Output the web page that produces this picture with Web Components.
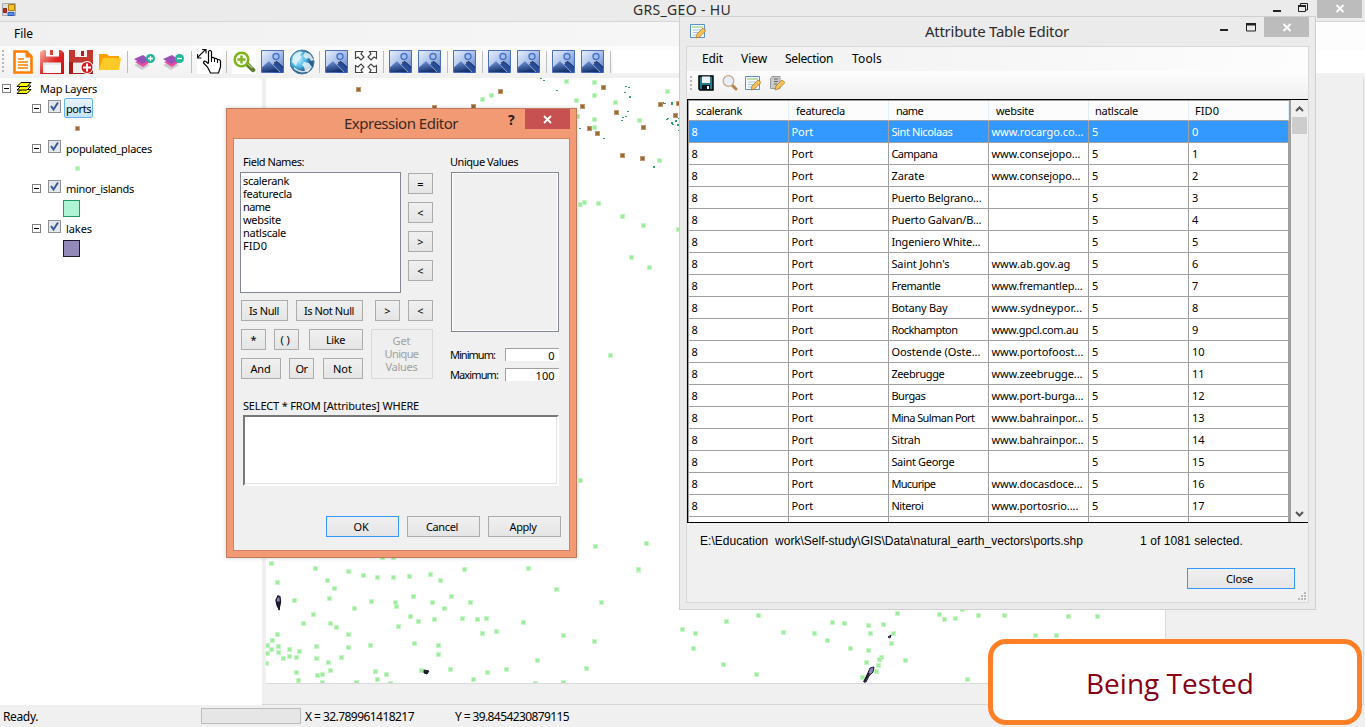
<!DOCTYPE html>
<html lang="en">
<head>
<meta charset="utf-8">
<title>GRS_GEO - HU</title>
<style>
html,body{margin:0;height:100%;overflow:hidden}
body{position:relative;width:1365px;height:727px;font:11px/13px "Noto Sans","Open Sans",sans-serif;color:#000;background:#f0f0f0}
</style>
</head>
<body>
<geo-app></geo-app>
<attribute-window></attribute-window>
<expression-window></expression-window>
<stage-note><ui-text w="168">Being Tested</ui-text></stage-note>
<script>
const define=(name,css,html)=>customElements.define(name,class extends HTMLElement{
  connectedCallback(){
    if(this.shadowRoot)return;
    this.attachShadow({mode:'open'}).innerHTML='<style>*{box-sizing:border-box}[hidden]{display:none}'+css+'</style>'+(typeof html==='function'?html(this):html);
  }
});

/* Registered before ui-text, which measures itself in the font of its host */
define('stage-note',':host{position:absolute;left:988px;top:639px;width:374px;height:86px;box-sizing:border-box;border:5px solid #ff7f27;border-radius:18px;background:#fff;color:#880015;font:28px/78px "Open Sans",sans-serif;padding-left:93px}','<slot></slot>');

/* Text run whose tracking is adjusted to a given width */
customElements.define('ui-text',class extends HTMLElement{
  connectedCallback(){
    if(this.shadowRoot)return;
    this.attachShadow({mode:'open'}).innerHTML='<style>:host{display:inline-block;white-space:pre;flex:none}</style><slot></slot>';
    const w=+this.getAttribute('w');
    if(w){
      const n=this.textContent.length,now=this.getBoundingClientRect().width;
      this.style.letterSpacing=((w-now)/n).toFixed(3)+'px';
    }
  }
});

const icons={
  app:'<svg width="14" height="13" viewBox="0 0 14 13"><path d="M.5.5h13v12H.5z" fill="#ddd" stroke="#aaa"/><path d="M6.500 1.500h6v6h-6z" fill="#f0c22c" stroke="#a87a10"/><path d="M1.500 5.500h3v4h-3z" fill="#c3301f" stroke="#8d1a10"/><path d="M6 9.500h6v3H6z" fill="#5b8fe8" stroke="#2a5cc0"/></svg>',
  doc:'<svg width="24" height="24" viewBox="0 0 24 24"><path d="M3.500 1.500h12l5 5v16h-17z" fill="#fff" stroke="#ff8000" stroke-width="2.600"/><path d="M15 1v6h6" fill="#ff8000" stroke="#ff8000"/><path d="M7 9h6M7 12h10M7 15h10M7 18h10" stroke="#ff8000" stroke-width="1.500"/></svg>',
  save:'<svg width="24" height="24" viewBox="0 0 24 24"><defs><linearGradient id="s" x2="1" y2="1"><stop stop-color="#f9b9a6"/><stop offset=".55" stop-color="#dd2424"/><stop offset="1" stop-color="#c60c14"/></linearGradient></defs><path d="M0 2l3-2h18l3 3v21H0z" fill="url(#s)"/><path d="M6 0h13v6.500H6z" fill="#fff"/><path d="M10 0h3v5h-3z" fill="#d7443d"/><path d="M3 12.500h18V23H3z" fill="#f8f8fa"/><path d="M3 14h18" stroke="#d5dde2"/></svg>',
  saveadd:'<svg width="24" height="24" viewBox="0 0 24 24"><path d="M0 0h24v24H0z" fill="#a61c1c"/><path d="M0 0h24v12H0z" fill="#c43630"/><path d="M6 0h12v7H6z" fill="#f5efef"/><path d="M12 1h3v5h-3z" fill="#b02020"/><path d="M4 12.500h13V23H4z" fill="#eee"/><circle cx="18" cy="17.500" r="6.500" fill="#fff"/><circle cx="18" cy="17.500" r="5.500" fill="#d01c22"/><path d="M18 13.500v8M14 17.500h8" stroke="#fff" stroke-width="2"/></svg>',
  folder:'<svg width="24" height="24" viewBox="0 0 24 24"><path d="M1 4h8l2 2h10v14H1z" fill="#ffa000"/><path d="M5 8h18l-2 12H1z" fill="#ffca28"/></svg>',
  ladd:'<svg width="24" height="24" viewBox="0 0 24 24"><path d="M1 15l8 5 8-5-8-3z" fill="#ccc9cf"/><path d="M2 12l8 5 7-5-7-3z" fill="#e94ba0"/><path d="M1 9l8 5 8-4-7-5z" fill="#9b50b8"/><circle cx="17.500" cy="8.500" r="4.500" fill="#20b796"/><path d="M17.500 6v5M15 8.500h5" stroke="#fff" stroke-width="1.400"/></svg>',
  lsub:'<svg width="24" height="24" viewBox="0 0 24 24"><path d="M1 15l8 5 8-5-8-3z" fill="#ccc9cf"/><path d="M2 12l8 5 7-5-7-3z" fill="#e94ba0"/><path d="M1 9l8 5 8-4-7-5z" fill="#9b50b8"/><circle cx="17.500" cy="8.500" r="4.500" fill="#20b796"/><path d="M15 8.500h5" stroke="#fff" stroke-width="1.400"/></svg>',
  hand:'<svg width="25" height="25" viewBox="0 0 25 25"><path d="M0 0h25v25H0z" fill="#fff"/><path d="M0 9L9 0M5 .500h4v4M.500 5v4h4" fill="none" stroke="#111" stroke-width="1.200"/><path d="M11.500 14V2.500q1.500-2 3 0V9q2-1.500 3 .8 2-1 3 1 2.500-1 3 1.500V18l-2 6h-8l-3-6-4-4q0-2.500 2.500-1.500l2 2z" fill="#fff" stroke="#000" stroke-width="1.200"/><path d="M14.500 9v4M17.500 10v3M20.500 11v3" stroke="#000"/></svg>',
  zoom:'<svg width="24" height="24" viewBox="0 0 24 24"><path d="M0 0h24v24H0z" fill="#fff"/><path d="M15 14l6 6" stroke="#5c7d2a" stroke-width="4.500" stroke-linecap="round"/><path d="M14.500 13l6 5" stroke="#a8c77a" stroke-width="1.500"/><circle cx="9.500" cy="9.500" r="6.800" fill="#fff" stroke="#7db51c" stroke-width="2.600"/><path d="M9.500 5.500v8M5.500 9.500h8" stroke="#7db51c" stroke-width="2.400"/></svg>',
  image:'<svg width="23" height="23" viewBox="0 0 23 23"><defs><linearGradient id="a" x2="1" y2="1"><stop stop-color="#eaf1fd"/><stop offset=".5" stop-color="#a9c0ea"/><stop offset="1" stop-color="#5679c2"/></linearGradient><linearGradient id="b" x2=".3" y2="1"><stop stop-color="#7fa3e8"/><stop offset="1" stop-color="#17356f"/></linearGradient></defs><path d="M.5.5h22v22H.5z" fill="url(#a)" stroke="#4a6fb9"/><circle cx="15" cy="6.500" r="3" fill="#a3bff0" stroke="#4a73c4" stroke-width="1.400"/><path d="M12 14.500l4-3 6 5v6H12z" fill="#274d9b"/><path d="M1 17l7-6.500L19 22H1z" fill="url(#b)"/><path d="M1 17l7-6.500L19 22" fill="none" stroke="#cfdff8" stroke-width=".6"/><path d="M13 13l3-1.500 6 6" stroke="#16264d" fill="none"/></svg>',
  globe:'<svg width="26" height="26" viewBox="0 0 26 26"><defs><radialGradient id="a" cx=".35" cy=".4"><stop stop-color="#c4f2ff"/><stop offset=".6" stop-color="#4fb9e6"/><stop offset="1" stop-color="#235f8f"/></radialGradient></defs><circle cx="12" cy="13" r="12" fill="url(#a)" stroke="#4a7ba0"/><path d="M3 7q5-6 10-4l-3 3 2 2-4 4-2 5-4-4zM15 3l5 2 4 6-3 1-2-3-3 1-3-3zM14 13l5 1 3 4-4 5-3-1-1-4-2-2z" fill="#e8f5fa" opacity=".85"/><path d="M4 19q8 7 16 1" stroke="#fff" fill="none" opacity=".8" stroke-width="1.500"/></svg>',
  expand:'<svg width="24" height="24" viewBox="0 0 24 24"><path d="M0 0h24v24H0z" fill="#fff"/><g fill="#fff" stroke="#444" stroke-width="1.200"><path id="q" d="M1.500 1.500h7L7 4l3 3-3 3-3-3-2.500 1.500z"/><use href="#q" transform="matrix(-1 0 0 1 24 0)"/><use href="#q" transform="matrix(1 0 0 -1 0 24)"/><use href="#q" transform="matrix(-1 0 0 -1 24 24)"/></g></svg>',
  stack:'<svg width="17" height="14" viewBox="0 0 17 14"><g fill="#ff0" stroke="#000"><path d="M1 12.500l4-4h10l-4 4z"/><path d="M1 9l4-4h10l-4 4z"/><path d="M1 5.500l4-4h10l-4 4z"/></g></svg>',
  floppy:'<svg width="16" height="16" viewBox="0 0 16 16"><path d="M1 1h14v14H2l-1-1z" fill="#28788c" stroke="#000" stroke-width="1.500"/><path d="M4 1.500h8V8H4z" fill="#eef4f6"/><path d="M4 10h8v5H4z" fill="#0b1220"/><path d="M9 11h2v3H9z" fill="#fff"/></svg>',
  lens:'<svg width="16" height="16" viewBox="0 0 16 16"><path d="M10.500 10.500L14 14" stroke="#b58348" stroke-width="3" stroke-linecap="round"/><circle cx="6.500" cy="6" r="5.300" fill="#e6f0fa" stroke="#cda68a" stroke-width="1.300"/></svg>',
  tableedit:'<svg width="16" height="16" viewBox="0 0 16 16"><path d="M.5 1.500h14v13H.5z" fill="#f6fbff" stroke="#5b8fcc"/><path d="M2 4h11" stroke="#8cc06e"/><path d="M3 7h10M3 9.500h10M3 12h8" stroke="#a9c4e2"/><path d="M6 15l1-4 6-6 3 2.500-6.500 6.500z" fill="#f3c35a" stroke="#b57a25" stroke-width=".8"/></svg>',
  pageedit:'<svg width="16" height="16" viewBox="0 0 16 16"><path d="M3 1.500h8v12H1.500V3.500z" fill="#c9c9c9" stroke="#999"/><path d="M5 4h4M5 6.500h4M5 9h3" stroke="#666"/><path d="M6 15l1-4 6-6 3 2.500-6.500 6.500z" fill="#f3c35a" stroke="#b57a25" stroke-width=".8"/></svg>'
};
define('ui-icon',':host{display:block;flex:none}svg{display:block}',e=>icons[e.getAttribute('name')]);

define('grip-dots',':host{display:block;width:2px;flex:none;background:repeating-linear-gradient(#b8b8b8 0 2px,transparent 2px 4px)}','');

define('push-button',`:host{display:flex;flex:none;align-items:center;justify-content:center;box-sizing:border-box;height:21px;border:1px solid #acacac;background:linear-gradient(#f0f0f0,#e5e5e5);text-align:center;padding-right:1px}
:host([primary]){border-color:#39f}
:host([disabled]){border-color:#d9d9d9;background:#efefef;color:#a0a0a0}`,'<slot></slot>');

/* ---------- main window ---------- */
define('main-toolbar',`:host{display:flex;height:32px;background:linear-gradient(#fdfdfd,#f0f0f0);box-sizing:border-box;padding-left:2px}
grip-dots{height:23px;margin:4px 7px 0 0}
.s{width:29px;height:31px;display:flex;align-items:center}
i{width:6px;display:block;padding-left:0}i:before{content:"";display:block;width:1px;height:22px;margin-top:5px;background:#bdbdbd}
b{flex:1;height:23px;margin-top:4px;background:#fff;margin-left:-3px}`,
()=>'<grip-dots></grip-dots>'+'doc save saveadd folder | ladd lsub | hand | zoom image globe | image expand | image image | image | image image | image image |'.split(' ')
.map(n=>n==='|'?'<i></i>':`<div class="s"><ui-icon name="${n}"></ui-icon></div>`).join('')+'<b></b>');

define('tree-item',`:host{display:block}
.r{display:flex;align-items:center;height:20px;padding-left:32px}
:host([root]) .r{padding-left:2px}
.x{width:9px;height:9px;border:1px solid #808080;background:linear-gradient(#000,#000) 1px 3px/5px 1px no-repeat #fff}
.c{width:13px;height:13px;margin:-3px 3px 0 7px;border:1px solid #8e8f8f;background:#e4e7ec}
.c svg{display:block}
.l{height:20px;line-height:19px;padding:0 1px;border:1px solid transparent;border-radius:2px}
:host([root]) .l{line-height:20px;margin-left:-2px}
:host([selected]) .l{border-color:#66b5ec;background:linear-gradient(#e8f4fd,#c4e3fa)}
.k{height:20px;display:flex;align-items:center;padding-left:63px}
.sw{width:17px;height:17px;border:1px solid}
.d{width:5px;height:5px;margin-left:12px;border:1px solid}
ui-icon{margin:0 7px 0 5px}`,
e=>{const root=e.hasAttribute('root'),f=e.getAttribute('fill'),s=e.getAttribute('edge');
return `<div class="r"><span class="x"></span>${root?'<ui-icon name="stack"></ui-icon>':'<span class="c"><svg width="11" height="11" viewBox="0 0 11 11"><path d="M2 5l2.500 3.500L9 1.500" fill="none" stroke="#38599c" stroke-width="2"/></svg></span>'}<span class="l"><slot></slot></span></div>`+
(f?`<div class="k"><span class="${e.hasAttribute('point')?'d':'sw'}" style="background:${f};border-color:${s}"></span></div>`:'');});

const places=[
[262,550,'28,40 160,55 259,64 304,76 346,82 394,82 442,79 505,73 535,91 607,58 799,55 1129,61 46,97 196,91 217,115 202,145 97,151 328,154 277,175 400,157 403,169 454,139 511,157 568,139 547,175 625,157 883,118 1018,157 154,193 124,220 205,220 223,232 259,253 409,229 445,199 469,214 517,208 601,205 646,208 673,205 703,244 661,250 784,217 904,256 997,274 46,253 31,271 16,286 28,298 49,289 49,307 16,310 64,325 82,298 82,319 112,304 103,322 163,289 163,325 259,292 238,322 325,286 457,280 529,286 529,313 13,340 199,337 205,361 181,373 166,376 103,367 109,391 181,397 283,397 340,364 373,373 346,388 385,400 478,361 565,358 634,388 676,367 733,358 826,331 820,400 904,397 973,355 361,22 394,22'],
[560,70,'19,34 103,37 103,76 49,91 166,97 322,64 238,151 103,148 103,172 53,140 298,271 61,403 73,397 115,400 187,439 250,466 355,478 214,562 268,592 151,856 61,1231 106,1429 259,1420 235,1499'],
[310,0,'544,286 517,298'],
[680,420,'7,628 139,604 235,586 46,640 40,685 130,733 229,763 310,637 403,640 457,607 493,610 442,661 511,685 565,616 571,640 610,613 652,580 640,640 634,670 565,691 559,727 604,712 598,718 595,736 589,754 676,721 547,772 778,583 793,598 826,595 895,586 973,586 848,568 862,778'],
[1000,420,'13,586 205,589 292,589 106,646 169,646']];
const ports=[[560,70,'130,52 67,109 170,127 88,175 112,190 250,172 301,103 354,100 346,136 187,256 247,265'],[310,0,'145,268 571,274 373,323 490,320']];
const isles=[[560,70,'196,49 205,51 193,66 207,79 306,97 312,100 333,97 333,101 201,123 195,138 187,143 183,151 58,174 131,204 321,145 318,147 334,157 336,162 346,152 347,155 354,146 353,163 354,180 279,289'],[310,0,'692,236 700,240 738,272']];
const dots=(sets,draw)=>sets.map(([ox,oy,s])=>s.split(' ').map(p=>{const [x,y]=p.split(',');return draw(Math.round(ox+x/3-266.5),Math.round(oy+y/3-78.5));}).join('')).join('');
define('map-canvas',':host{display:block;box-sizing:border-box;width:900px;height:606px;background:#fff;border:solid #d9d9d9;border-width:0 1px 1px 0;overflow:hidden}svg{display:block}',
()=>`<svg width="899" height="605" viewBox="0 0 899 605" shape-rendering="crispEdges">`+
dots(isles,(x,y)=>`<rect x="${x}" y="${y}" width="2" height="${x%3?1:2}" fill="#2f9f6e"/>`)+
dots(places,(x,y)=>`<rect x="${x-2}" y="${y-2}" width="5" height="5" fill="#c8f6c8"/><rect x="${x-1}" y="${y-1}" width="3" height="3" fill="#9cee9c"/>`)+
dots(ports,(x,y)=>`<rect x="${x-2}" y="${y-2}" width="5" height="5" fill="#bf9a70"/><rect x="${x-1}" y="${y-1}" width="3" height="3" fill="#9c6833"/>`)+
`<g fill="#8e84b8" stroke="#1d1a2e" shape-rendering="auto"><path d="M12 518l2 1 .5 5-1.500 7-2-4-1-5z" stroke-width="1.400"/><path d="M11 524l3 0-1 8z" fill="#1d1a2e"/><path d="M158 592l5 1-2 3-3-1z" fill="#1d1a2e"/><path d="M598 604l3-7 3-7 4-1-1 5-4 4-3 6z"/><path d="M598 604l5-9" stroke-width="2"/><path d="M622 559l3-2-1 3z"/></g></svg>`);

define('geo-app',`:host{display:flex;flex-direction:column;height:727px;background:#f0f0f0}
.t{height:22px;background:#ebebeb;border-bottom:1px solid #d6d6d6;display:flex;position:relative;flex:none}
.t>ui-icon{margin:3px 0 0 2px}
.tt{font-size:14px;line-height:20px;color:#2b2b2b;margin-left:617px}
.wc{margin:0 3px 0 auto;display:flex;height:18px}
.wc svg{display:block}
.m{height:24px;flex:none;background:linear-gradient(90deg,#f0f0f0,#fdfdfd);padding:5px 0 0 14px;font-size:12px;line-height:14px}
.w{flex:1;display:flex;min-height:0}
.tree{width:262px;background:#fff}
.r{flex:1;padding-left:4px;border-bottom:1px solid #d7d7d7;border-right:1px solid #d9d9d9;margin-right:1px;background:#f0f0f0}
.st{height:22px;flex:none;display:flex;align-items:center;font-size:12px;padding:0 3px}
.p{width:100px;height:16px;border:1px solid #bcbcbc;background:#e6e6e6;margin:0 4px 0 163px}
.st ui-text{padding-top:1px}
.st ui-text+ui-text{margin-left:41px}`,
`<div class="t"><ui-icon name="app"></ui-icon><ui-text class="tt" w="98">GRS_GEO - HU</ui-text><div class="wc"><svg width="89" height="18" viewBox="0 0 89 18"><path d="M0 10h8v2H0z" fill="#222"/><path d="M25.500 5.500h7v6h-7zM27.500 5V3.500h7V10H33" fill="none" stroke="#222"/><path d="M25 5h8v2h-8z" fill="#222"/><path d="M44 0h45v18H44z" fill="#bcbcbc"/><path d="M63.500 5l7 7M70.500 5l-7 7" stroke="#fff" stroke-width="1.800"/></svg></div></div>
<div class="m"><ui-text w="19">File</ui-text></div><main-toolbar></main-toolbar>
<div class="w"><div class="tree">
<tree-item root><ui-text w="57">Map Layers</ui-text></tree-item>
<tree-item selected point fill="#9c6833" edge="#c9a983"><ui-text w="25">ports</ui-text></tree-item>
<tree-item point fill="#a5f0a5" edge="#c9f5c9"><ui-text w="86">populated_places</ui-text></tree-item>
<tree-item fill="#aff5d5" edge="#1c9a62"><ui-text w="68">minor_islands</ui-text></tree-item>
<tree-item fill="#948aba" edge="#1d1a2e"><ui-text w="26">lakes</ui-text></tree-item>
</div><div class="r"><map-canvas></map-canvas></div></div>
<div class="st"><ui-text w="35">Ready.</ui-text><div class="p"></div><ui-text w="109">X = 32.789961418217</ui-text><ui-text w="114">Y = 39.8454230879115</ui-text></div>`);

/* ---------- attribute table ---------- */
const rows=[['Sint Nicolaas',61,'www.rocargo.co...',92],['Campana',46,'www.consejopo...',89],['Zarate',33,'www.consejopo...',89],['Puerto Belgrano...',90],['Puerto Galvan/B...',90],['Ingeniero White...',89],["Saint John's",58,'www.ab.gov.ag',79],['Fremantle',49,'www.fremantlep...',91],['Botany Bay',56,'www.sydneypor...',91],['Rockhampton',66,'www.gpcl.com.au',87],['Oostende (Oste...',89,'www.portofoost...',92],['Zeebrugge',53,'www.zeebrugge...',91],['Burgas',34,'www.port-burga...',92],['Mina Sulman Port',83,'www.bahrainpor...',92],['Sitrah',29,'www.bahrainpor...',92],['Saint George',63],['Mucuripe',44,'www.docasdoce...',91],['Niteroi',32,'www.portosrio....',87]];
define('data-grid',`:host{display:flex;box-sizing:border-box;height:424px;border:1px solid #000;border-right:0;background:#fff;overflow:hidden}
.g{width:603px;border:solid #a0a0a0;border-width:1px 2px 0 1px;overflow:hidden;flex:none}
.r{display:grid;grid-template-columns:100px 100px 100px 100px 100px 100px;height:22px;line-height:20px}
.r>span{border-right:1px solid #a0a0a0;border-bottom:1px solid #a0a0a0;padding:1px 0 0 2.400px;overflow:hidden;white-space:pre}
.h{height:20px;line-height:18px;background:#fcfcfc}
.h>span{border-right-color:#e3ecf8;padding-left:7px}
.r>span:nth-child(5){padding-left:3px}
.h>span:nth-child(5){padding-left:6px}
.r>span:last-child{padding-left:3px}
.h>span:last-child{padding-left:6px}
.sel{background:#39f;color:#fff}
.sb{flex:1;background:#f0f0f0;display:flex;flex-direction:column;padding:0 1px}
.th{height:17px;background:#cdcdcd;margin-bottom:auto}
svg{display:block}`,
()=>`<div class="g"><div class="r h">${[['scalerank',46],['featurecla',49],['name',27],['website',38],['natlscale',43],['FID0',24]].map(([t,w])=>`<span><ui-text w="${w}">${t}</ui-text></span>`).join('')}</div>`+
rows.map((r,i)=>`<div class="r${i?'':' sel'}"><span>8</span><span><ui-text w="22">Port</ui-text></span><span><ui-text w="${r[1]}">${r[0]}</ui-text></span><span>${r[2]?`<ui-text w="${r[3]}">${r[2]}</ui-text>`:''}</span><span>5</span><span>${i}</span></div>`).join('')+
`<div class="r"><span></span><span></span><span></span><span></span><span></span><span></span></div></div>
<div class="sb"><svg width="15" height="17"><path d="M4 11l3.500-3.500L11 11" fill="none" stroke="#555" stroke-width="2"/></svg><div class="th"></div><svg width="15" height="17"><path d="M4 7l3.500 3.500L11 7" fill="none" stroke="#555" stroke-width="2"/></svg></div>`);

define('attribute-window',`:host{position:absolute;left:679px;top:16px;width:637px;height:594px;box-sizing:border-box;border:1px solid #cfcfcf;background:#ebebeb;display:flex;flex-direction:column;padding:0 6px 6px}
.t{height:29px;display:flex;flex:none}
.t>ui-icon{margin:6px 0 0 4px}
.tt{font-size:15px;line-height:28px;color:#2b2b2b;margin-left:219px}
.wc{margin-left:auto}
.b{flex:1;border:1px solid #d9d9d9;background:#f0f0f0;display:flex;flex-direction:column;position:relative}
.m{height:24px;background:linear-gradient(90deg,#f0f0f0,#fdfdfd);display:flex;padding:5px 0 0 15px;font-size:12px;line-height:14px;flex:none}
.tb{height:28px;background:linear-gradient(#fdfdfd,#f0f0f0);display:flex;padding:4px 0 0 3px;flex:none}
.tb grip-dots{height:14px;margin:1px 6px 0 0}
.tb ui-icon{margin:0 7.500px 0 0}
.f{display:flex;font:12px/14px "Liberation Sans",sans-serif;padding:11px 0 0 13px}
.f ui-text+ui-text{margin-left:57px}
push-button{width:108px;margin:20px 13px 0 auto;padding-right:3px}
.z{position:absolute;right:1px;bottom:1px}`,
`<div class="t"><ui-icon name="tableedit"></ui-icon><ui-text class="tt" w="144">Attribute Table Editor</ui-text><svg class="wc" width="90" height="20" viewBox="0 0 90 20"><path d="M1 12h8v2H1z" fill="#222"/><path d="M27.500 7h9v7h-9z" fill="none" stroke="#222"/><path d="M27 6h10v2.500H27z" fill="#222"/><path d="M45 0h45v20H45z" fill="#bcbcbc"/><path d="M64.500 7l7 7M71.500 7l-7 7" stroke="#fff" stroke-width="1.800"/></svg></div>
<div class="b"><div class="m"><ui-text w="21" style="margin-right:18px">Edit</ui-text><ui-text w="26" style="margin-right:18px">View</ui-text><ui-text w="48" style="margin-right:19px">Selection</ui-text><ui-text w="30">Tools</ui-text></div>
<div class="tb"><grip-dots></grip-dots><ui-icon name="floppy"></ui-icon><ui-icon name="lens"></ui-icon><ui-icon name="tableedit"></ui-icon><ui-icon name="pageedit"></ui-icon></div>
<data-grid></data-grid>
<div class="f"><ui-text w="383">E:\\Education  work\\Self-study\\GIS\\Data\\natural_earth_vectors\\ports.shp</ui-text><ui-text w="103">1 of 1081 selected.</ui-text></div>
<push-button primary><ui-text w="27">Close</ui-text></push-button>
<svg class="z" width="9" height="9" fill="#b8b8b8"><path d="M6 0h2v2H6zM6 3h2v2H6zM6 6h2v2H6zM3 3h2v2H3zM3 6h2v2H3zM0 6h2v2H0z"/></svg></div>`);

/* ---------- expression editor ---------- */
define('expression-window',`:host{position:absolute;left:226px;top:108px;width:351px;height:450px;box-sizing:border-box;border:1px solid #c17a5c;background:#f19a74;display:flex;flex-direction:column;padding:0 6px 6px;box-shadow:0 0 4px #0003}
.t{height:29px;display:flex;flex:none}
.tt{font-size:15px;line-height:29px;color:#3c2a22;margin-left:111px}
.q{margin:2px 0 0 50px;font:bold 14px/18px "Noto Sans",sans-serif;width:14px;color:#222}
.cl{display:block;background:#c75050;margin:0 0 0 auto;flex:none}
.b{flex:1;border:1px solid #cf8260;background:#f0f0f0;padding:16px 8px 0 6px}
.top{display:flex}
.left{width:194px}
.lb{height:13px;padding-left:3px}
.row{display:flex}
.list{width:161px;height:121px;border:1px solid #828790;background:#fff;margin:4px 7px 0 0;padding:1px 2px;display:flex;flex-direction:column;align-items:flex-start}
.ops{display:grid;gap:8px;width:25px;margin-top:5px;align-content:start}
.ops push-button,.sm{padding-right:0}
.keys{display:grid;grid-template-columns:123px 62px;margin:7px 0 0 1px;gap:8px 7px}
.keys .row{gap:8px}
.all{grid-column:1/3}
.tall{grid-row:2/4;grid-column:2;height:50px;display:flex}
.right{margin-left:16px;width:109px}
.box{height:160px;border:1px solid #828790;box-shadow:inset 0 0 0 1px #fff;margin:4px 0 0 1px}
.n{display:flex;justify-content:space-between;height:13px;margin-top:7px}
.n span{width:54px;height:13px;background:#fff;border:solid #a0a0a0;border-width:1px 0 0 1px;display:flex;justify-content:flex-end;padding-right:4.500px;line-height:14px}
.box+.n{margin-top:16px}
.sq{height:71px;margin:3px 0 0 3px;width:316px;background:#fff;border:2px solid;border-color:#787878 #fff #fff #787878;box-shadow:inset -1px -1px #e3e3e3}
.bt{display:flex;gap:8px;justify-content:flex-end;margin:30px 0 0}
.bt push-button{width:73px;padding-right:3px}`,
()=>{const b=(t,w,tw,ml)=>`<push-button${w===25?' class="sm"':''} style="width:${w}px${ml?`;margin-left:${ml}px`:''}"><ui-text w="${tw||0}">${t}</ui-text></push-button>`;
return `<div class="t"><ui-text class="tt" w="114">Expression Editor</ui-text><span class="q">?</span><svg class="cl" width="45" height="20"><path d="M19 7l7 7M26 7l-7 7" stroke="#fff" stroke-width="1.800"/></svg></div>
<div class="b"><div class="top"><div class="left"><div class="lb"><ui-text w="61">Field Names:</ui-text></div>
<div class="row"><div class="list"><ui-text w="46">scalerank</ui-text><ui-text w="49">featurecla</ui-text><ui-text w="27">name</ui-text><ui-text w="38">website</ui-text><ui-text w="43">natlscale</ui-text><ui-text w="24">FID0</ui-text></div>
<div class="ops">${b('=',25)+b('&lt;',25)+b('&gt;',25)+b('&lt;',25)}</div></div>
<div class="keys"><div class="row all">${b('Is Null',47,30)+b('Is Not Null',67,50)+b('&gt;',25,0,4)+b('&lt;',25)}</div>
<div class="row">${b('*',25)+b('()',25,12)+b('Like',54,19,2)}</div>
<div class="row">${b('And',40,20)+b('Or',25,12)+b('Not',40,19,1)}</div>
<div class="tall"><push-button disabled style="height:50px;width:62px;padding-bottom:1px"><div><ui-text w="18">Get</ui-text><br><ui-text w="34">Unique</ui-text><br><ui-text w="32">Values</ui-text></div></push-button></div></div></div>
<div class="right"><ui-text w="68" style="display:block;width:max-content">Unique Values</ui-text><div class="box"></div>
<div class="n"><ui-text w="45">Minimum:</ui-text><span>0</span></div><div class="n"><ui-text w="48">Maximum:</ui-text><span>100</span></div></div></div>
<div class="lb" style="margin-top:18px"><ui-text w="176">SELECT * FROM [Attributes] WHERE</ui-text></div>
<div class="sq"></div>
<div class="bt"><push-button primary><ui-text w="15">OK</ui-text></push-button><push-button><ui-text w="32">Cancel</ui-text></push-button><push-button><ui-text w="27">Apply</ui-text></push-button></div></div>`;});
</script>
</body>
</html>
